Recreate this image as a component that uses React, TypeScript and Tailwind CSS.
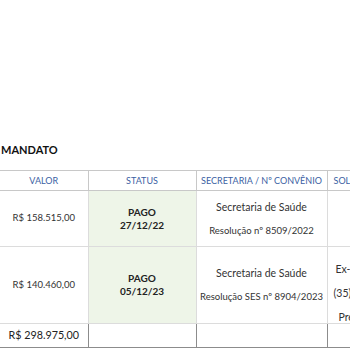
import React from 'react';

const rows = [
  {
    valor: 'R$ 158.515,00',
    data: '27/12/22',
    secretaria: 'Secretaria de Saúde',
    resolucao: 'Resolução nº 8509/2022',
    h: 'h-[56px]',
    sol: null as null | string[],
  },
  {
    valor: 'R$ 140.460,00',
    data: '05/12/23',
    secretaria: 'Secretaria de Saúde',
    resolucao: 'Resolução SES nº 8904/2023',
    h: 'h-[76px]',
    sol: ['Ex-prefeito', '(35) 99812', 'Prefeito'],
  },
];

export default function App() {
  return (
    <div className="w-[350px] h-[350px] overflow-hidden bg-white font-['Lato','Liberation_Sans',sans-serif] text-[10.5px] text-[#333]">
      {/* titulo cortado da planilha */}
      <div className="pt-[142px] h-[170px] font-bold text-[11px] text-[#111] pl-px">MANDATO</div>

      <table className="table-fixed border-collapse w-[430px] whitespace-nowrap">
        <colgroup>
          <col className="w-[88px]" />
          <col className="w-[108px]" />
          <col className="w-[131px]" />
          <col className="w-[103px]" />
        </colgroup>
        <thead>
          <tr className="h-[20px] text-[#3b5fa3] text-[9px]">
            <th className="p-0 font-normal border-y border-[#c8c8c8] border-r">VALOR</th>
            <th className="p-0 font-normal border border-[#c8c8c8]">STATUS</th>
            <th className="p-0 font-normal border border-[#c8c8c8]">SECRETARIA / Nº CONVÊNIO</th>
            <th className="p-0 font-normal border border-[#c8c8c8] text-left pl-[6px]">SOLICITANTE</th>
          </tr>
        </thead>
        <tbody>
          {rows.map((r) => (
            <tr key={r.valor} className={r.h}>
              <td className="p-0 text-center border-b border-r border-[#dcdcdc] text-[9.5px]">{r.valor}</td>
              <td className="p-0 text-center border-b border-r border-[#dcdcdc] bg-[#eef5e8] font-bold text-[#222] text-[10px] leading-[13px]">
                <div>PAGO</div>
                <div>{r.data}</div>
              </td>
              <td className="p-0 text-center border-b border-r border-[#dcdcdc] leading-[12px]">
                <div>{r.secretaria}</div>
                <div className="h-[12px]" />
                <div className="text-[9.5px]">{r.resolucao}</div>
              </td>
              <td className="p-0 border-b border-[#dcdcdc] align-top leading-[12px]">
                {r.sol && (
                  <div className="pt-[16px] flex flex-col gap-[12px]">
                    <div className="pl-[8px]">{r.sol[0]}</div>
                    <div className="pl-[6px]">{r.sol[1]}</div>
                    <div className="pl-[11px]">{r.sol[2]}</div>
                  </div>
                )}
              </td>
            </tr>
          ))}
          <tr className="h-[24px] text-[10.75px] text-[#222]">
            <td className="p-0 text-center border-y border-r border-[#8c8c8c]">R$ 298.975,00</td>
            <td className="p-0 border border-[#8c8c8c]" />
            <td className="p-0 border border-[#8c8c8c]" />
            <td className="p-0 border border-[#8c8c8c]" />
          </tr>
        </tbody>
      </table>
    </div>
  );
}
